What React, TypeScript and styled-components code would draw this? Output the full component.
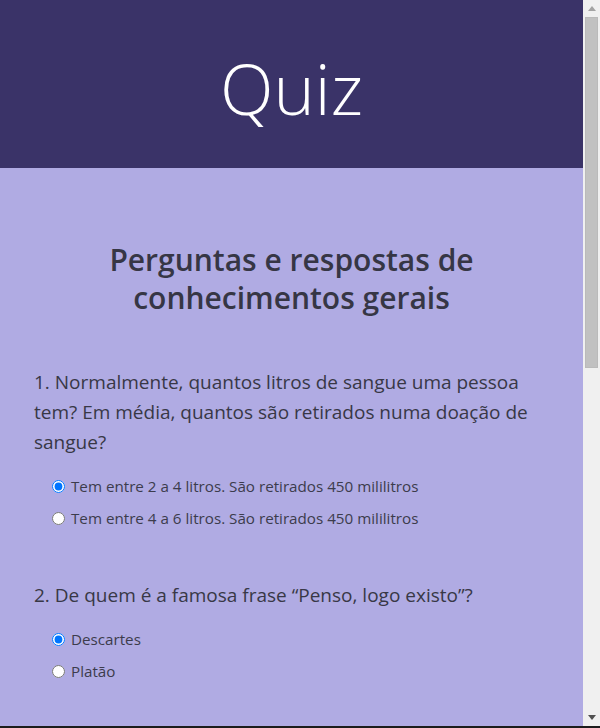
import React from "react";
import styled, { createGlobalStyle } from "styled-components";

const GlobalStyle = createGlobalStyle`
  html, body {
    margin: 0;
    padding: 0;
  }
  body {
    font-family: "Open Sans", "Noto Sans", Arial, sans-serif;
    background: #b0abe3;
    color: #383846;
  }
`;

const Page = styled.div`
  margin-right: 17px;
`;

const Header = styled.header`
  box-sizing: border-box;
  height: 168px;
  padding-top: 51px;
  background: #3a3368;
  display: flex;
  justify-content: center;
  align-items: flex-start;
`;

const Title = styled.h1`
  margin: 0;
  font-size: 70px;
  line-height: 74px;
  font-weight: 300;
  color: #ffffff;
`;

const Main = styled.main`
  background: #b0abe3;
  padding: 73px 34px 120px;
`;

const Heading = styled.h2`
  margin: 0 0 50px;
  text-align: center;
  font-size: 30px;
  line-height: 38px;
  font-weight: 600;
  color: #363645;
`;

const QuestionBlock = styled.section`
  display: flex;
  flex-direction: column;
  margin-bottom: 46px;
`;

const QuestionText = styled.p`
  margin: 0 0 13px;
  font-size: 19px;
  line-height: 30px;
  font-weight: 400;
  color: #383846;
`;

const OptionList = styled.div`
  display: flex;
  flex-direction: column;
  padding-left: 18px;
`;

const Option = styled.label`
  display: flex;
  align-items: center;
  gap: 6px;
  height: 32px;
  font-size: 15.2px;
  color: #3c3c4c;
`;

const Radio = styled.input`
  width: 13px;
  height: 13px;
  margin: 0;
  flex: none;
`;

/* Browser scrollbar as seen in the screenshot, overlaid at the right edge */
const ScrollBar = styled.div`
  position: fixed;
  top: 0;
  right: 0;
  bottom: 2px;
  width: 17px;
  background: #f0f0f0;
  display: flex;
  flex-direction: column;
  align-items: center;
`;

const ArrowButton = styled.div`
  flex: none;
  height: 17px;
  width: 17px;
  display: flex;
  align-items: center;
  justify-content: center;
`;

const Thumb = styled.div`
  flex: none;
  width: 13px;
  height: 351px;
  box-sizing: border-box;
  background: #c1c1c1;
  border: 1px solid #bababa;
`;

const Spacer = styled.div`
  flex: 1;
`;

const WindowEdge = styled.div`
  position: fixed;
  left: 0;
  right: 0;
  bottom: 0;
  height: 2px;
  background: #1c1c1c;
`;

type Question = {
  id: string;
  text: string;
  options: string[];
  checked: number;
};

const questions: Question[] = [
  {
    id: "q1",
    text: "1. Normalmente, quantos litros de sangue uma pessoa tem? Em média, quantos são retirados numa doação de sangue?",
    options: [
      "Tem entre 2 a 4 litros. São retirados 450 mililitros",
      "Tem entre 4 a 6 litros. São retirados 450 mililitros",
    ],
    checked: 0,
  },
  {
    id: "q2",
    text: "2. De quem é a famosa frase “Penso, logo existo”?",
    options: ["Descartes", "Platão"],
    checked: 0,
  },
  {
    id: "q3",
    text: "3. Qual o maior planeta do sistema solar?",
    options: ["Júpiter", "Saturno"],
    checked: 0,
  },
  {
    id: "q4",
    text: "4. Quantos ossos tem o corpo humano adulto?",
    options: ["206", "212"],
    checked: 0,
  },
  {
    id: "q5",
    text: "5. Qual é a capital da Austrália?",
    options: ["Camberra", "Sydney"],
    checked: 0,
  },
];

export default function App() {
  return (
    <>
      <GlobalStyle />
      <Page>
        <Header>
          <Title>Quiz</Title>
        </Header>
        <Main>
          <Heading>
            Perguntas e respostas de
            <br />
            conhecimentos gerais
          </Heading>
          {questions.map((q) => (
            <QuestionBlock key={q.id}>
              <QuestionText>{q.text}</QuestionText>
              <OptionList>
                {q.options.map((opt, i) => (
                  <Option key={opt}>
                    <Radio type="radio" name={q.id} defaultChecked={i === q.checked} />
                    {opt}
                  </Option>
                ))}
              </OptionList>
            </QuestionBlock>
          ))}
        </Main>
      </Page>
      <ScrollBar aria-hidden="true">
        <ArrowButton>
          <svg width="8" height="5" viewBox="0 0 8 5">
            <path d="M4 0 L8 5 L0 5 Z" fill="#a3a3a3" />
          </svg>
        </ArrowButton>
        <Thumb />
        <Spacer />
        <ArrowButton>
          <svg width="8" height="5" viewBox="0 0 8 5">
            <path d="M0 0 L8 0 L4 5 Z" fill="#505050" />
          </svg>
        </ArrowButton>
      </ScrollBar>
      <WindowEdge />
    </>
  );
}
